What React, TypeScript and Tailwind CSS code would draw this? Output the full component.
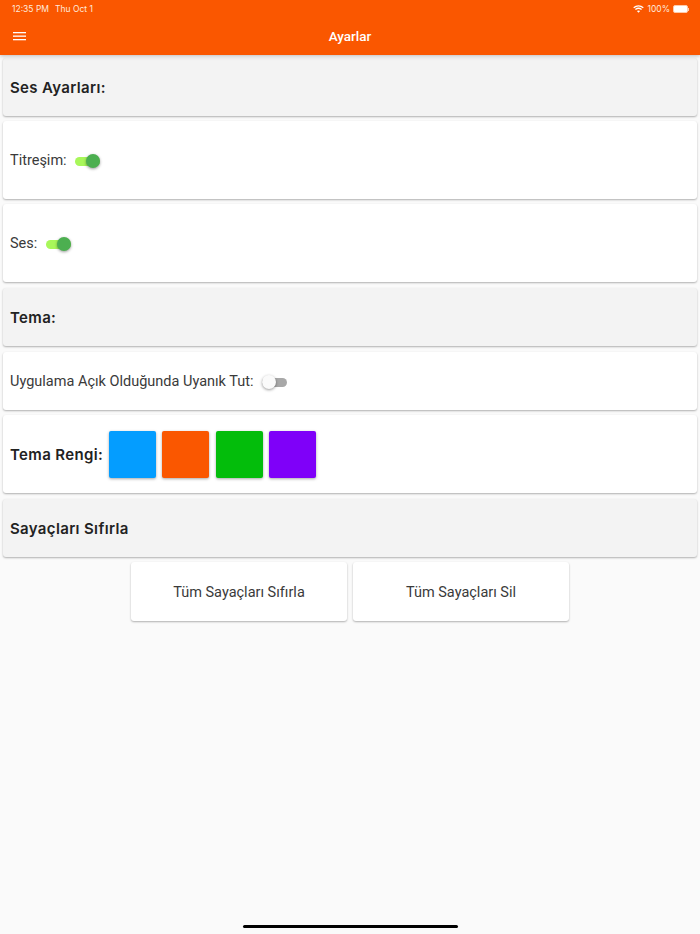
import React from "react";

const font = "font-['Roboto',sans-serif]";

function Toggle({ on }: { on: boolean }) {
  return (
    <span className="relative ml-[8px] inline-block h-[14px] w-[25px] shrink-0 translate-y-[1px]">
      <span className={`absolute left-0 top-[2.5px] h-[9px] w-[25px] rounded-full ${on ? "bg-[#a8f75a]" : "bg-[#a8a8a8]"}`} />
      <span
        className={`absolute top-0 h-[14px] w-[14px] rounded-full shadow-[0_1px_3px_rgba(0,0,0,0.4)] ${on ? "left-[11px] bg-[#4caf50]" : "left-0 bg-[#fafafa]"}`}
      />
    </span>
  );
}

function Card({ h, gray, children }: { h: string; gray?: boolean; children: React.ReactNode }) {
  return (
    <div className={`mx-[3px] flex items-center rounded-[3px] px-[7px] shadow-[0_1px_2px_rgba(0,0,0,0.3)] ${h} ${gray ? "bg-[#f3f3f3]" : "bg-white"}`}>
      {children}
    </div>
  );
}

function Heading({ children }: { children: React.ReactNode }) {
  return <span className="translate-y-[1px] font-['Inter',sans-serif] text-[15px] font-semibold tracking-[0.35px] text-[#222222]">{children}</span>;
}

function Label({ children }: { children: React.ReactNode }) {
  return <span className="translate-y-[1px] text-[14.5px] text-[#3a3a3a]">{children}</span>;
}

function Swatch({ color }: { color: string }) {
  return <div className={`h-[47px] w-[47px] rounded-[2px] shadow-[0_1px_3px_rgba(0,0,0,0.35)] ${color}`} />;
}

export default function App() {
  return (
    <div className={`${font} relative flex h-[934px] w-[700px] flex-col overflow-hidden bg-[#fafafa]`}>
      <header className="relative z-10 h-[55px] shrink-0 bg-[#fa5700] text-white shadow-[0_1px_4px_rgba(0,0,0,0.25)]">
        <div className="flex h-[17px] items-center justify-between pl-[12px] pr-[11px] pt-[1px] font-['Inter',sans-serif] text-[8.5px] text-[#ffe9dc]">
          <div className="flex gap-[6px]">
            <span>12:35 PM</span>
            <span>Thu Oct 1</span>
          </div>
          <div className="flex items-center gap-[3px]">
            <svg width="11" height="8" viewBox="0 0 11 8" fill="none" stroke="white" strokeWidth="1.3">
              <path d="M0.7 2.8C3.5 0.4 7.5 0.4 10.3 2.8" />
              <path d="M2.4 4.5C4.2 3 6.8 3 8.6 4.5" />
              <path d="M5.5 7.8L3.9 6.1C4.8 5.4 6.2 5.4 7.1 6.1Z" fill="white" stroke="none" />
            </svg>
            <span>100%</span>
            <span className="flex items-center">
              <span className="block h-[8px] w-[15px] rounded-[2px] border border-[#ffc9a8] bg-white" />
              <span className="block h-[3px] w-[1px] bg-[#ffc9a8]" />
            </span>
          </div>
        </div>
        <div className="relative flex h-[38px] items-center justify-center">
          <svg className="absolute left-[13px] top-[15px]" width="13" height="9" viewBox="0 0 13 9" fill="white">
            <rect x="0" y="0" width="13" height="1.3" />
            <rect x="0" y="3.5" width="13" height="1.3" />
            <rect x="0" y="7" width="13" height="1.3" />
          </svg>
          <span className="text-[13.5px] font-medium">Ayarlar</span>
        </div>
      </header>

      <main className="flex flex-col pt-[3px]">
        <Card h="h-[58px]" gray><Heading>Ses Ayarları:</Heading></Card>
        <div className="mt-[5px]">
          <Card h="h-[78px]"><Label>Titreşim:</Label><Toggle on /></Card>
        </div>
        <div className="mt-[5px]">
          <Card h="h-[78px]"><Label>Ses:</Label><span className="ml-[1px]" /><Toggle on /></Card>
        </div>
        <div className="mt-[6px]">
          <Card h="h-[58px]" gray><Heading>Tema:</Heading></Card>
        </div>
        <div className="mt-[6px]">
          <Card h="h-[58px]"><Label>Uygulama Açık Olduğunda Uyanık Tut:</Label><Toggle on={false} /></Card>
        </div>
        <div className="mt-[5px]">
          <Card h="h-[78px]">
            <Heading>Tema Rengi:</Heading>
            <div className="ml-[6px] flex gap-[6.4px]">
              <Swatch color="bg-[#049dff]" />
              <Swatch color="bg-[#fa5700]" />
              <Swatch color="bg-[#03bd0b]" />
              <Swatch color="bg-[#7f00f9]" />
            </div>
          </Card>
        </div>
        <div className="mt-[6px]">
          <Card h="h-[58px]" gray><Heading>Sayaçları Sıfırla</Heading></Card>
        </div>
        <div className="mt-[5px] flex justify-center gap-[6px]">
          {["Tüm Sayaçları Sıfırla", "Tüm Sayaçları Sil"].map((t) => (
            <div key={t} className="flex h-[59px] w-[216px] items-center justify-center rounded-[3px] bg-white shadow-[0_1px_2px_rgba(0,0,0,0.3)]">
              <Label>{t}</Label>
            </div>
          ))}
        </div>
      </main>

      <div className="absolute left-[243px] top-[925px] h-[3px] w-[215px] rounded-full bg-black" />
    </div>
  );
}
